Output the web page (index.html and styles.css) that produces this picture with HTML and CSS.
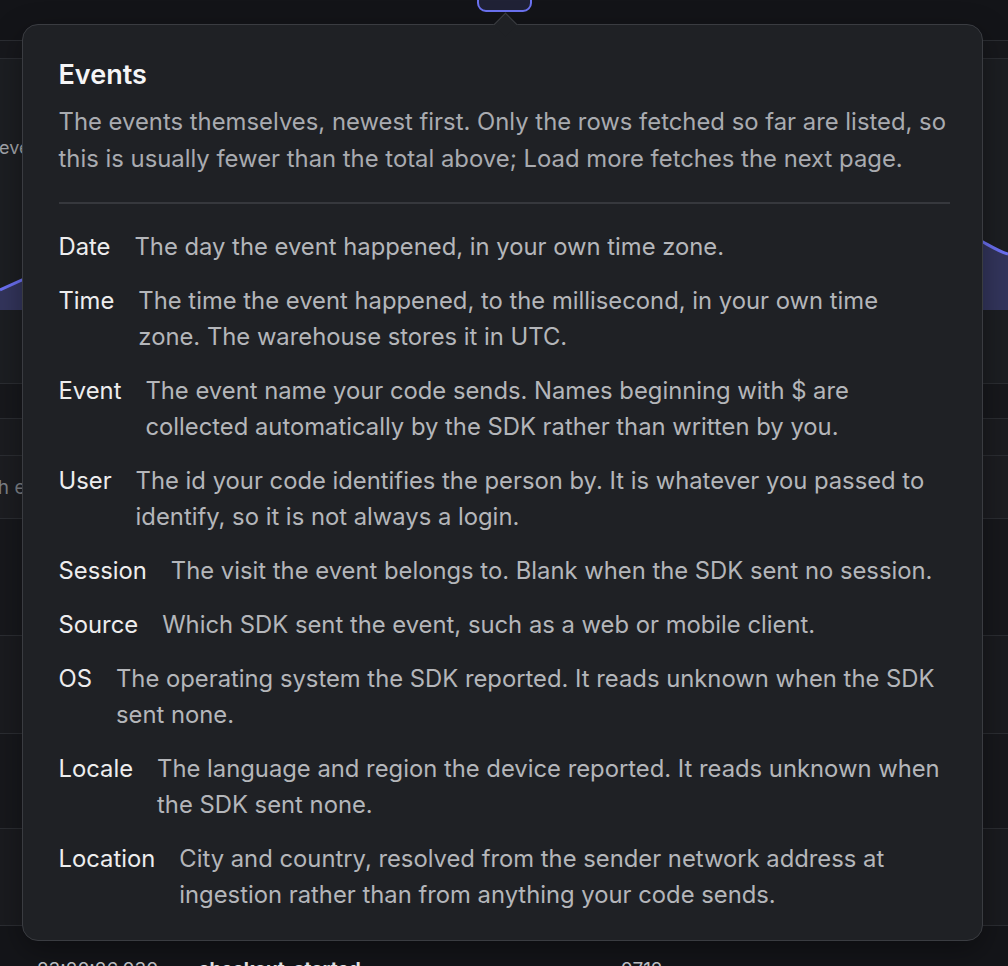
FILE: index.html
```html
<!DOCTYPE html>
<html lang="en">
<head>
<meta charset="utf-8">
<title>Events</title>
<link rel="stylesheet" href="styles.css">
</head>
<body>
<div class="page">
  <header class="topbar">
    <div class="trigger"></div>
  </header>
  <div class="tabs"></div>
  <section class="card">
    <div class="card-label">events</div>
    <svg class="chart" viewBox="0 0 1008 83" preserveAspectRatio="none" aria-hidden="true">
      <path d="M0 63 L22 53 L300 40 L600 30 L983 15 C992 20 1000 25 1008 27 L1008 83 L0 83 Z" fill="#33355c"/>
      <path d="M0 63 L22 53 L300 40 L600 30 L983 15 C992 20 1000 25 1008 27" fill="none" stroke="#6b70f2" stroke-width="3"/>
    </svg>
  </section>
  <div class="band"></div>
  <div class="band band-light"></div>
  <div class="search"><span class="search-text">Search events</span></div>
  <div class="trow trow-dark"></div>
  <div class="trow trow-a"></div>
  <div class="trow trow-dark trow-b"></div>
  <div class="trow trow-c"></div>
  <div class="lastrow">
    <span class="cell-time">23:20:26.030</span>
    <span class="cell-event">checkout_started</span>
    <span class="cell-user">0712</span>
  </div>
</div>

<div class="popover" role="dialog" aria-labelledby="pop-title">
  <h2 class="pop-title" id="pop-title">Events</h2>
  <p class="pop-desc">The events themselves, newest first. Only the rows fetched so far are listed, so this is usually fewer than the total above; Load more fetches the next page.</p>
  <div class="pop-divider"></div>
  <dl class="terms">
    <div class="term-row"><dt>Date</dt><dd>The day the event happened, in your own time zone.</dd></div>
    <div class="term-row"><dt>Time</dt><dd>The time the event happened, to the millisecond, in your own time zone. The warehouse stores it in UTC.</dd></div>
    <div class="term-row"><dt>Event</dt><dd>The event name your code sends. Names beginning with $ are collected automatically by the SDK rather than written by you.</dd></div>
    <div class="term-row"><dt>User</dt><dd>The id your code identifies the person by. It is whatever you passed to identify, so it is not always a login.</dd></div>
    <div class="term-row"><dt>Session</dt><dd>The visit the event belongs to. Blank when the SDK sent no session.</dd></div>
    <div class="term-row"><dt>Source</dt><dd>Which SDK sent the event, such as a web or mobile client.</dd></div>
    <div class="term-row"><dt>OS</dt><dd>The operating system the SDK reported. It reads unknown when the SDK sent none.</dd></div>
    <div class="term-row"><dt>Locale</dt><dd>The language and region the device reported. It reads unknown when the SDK sent none.</dd></div>
    <div class="term-row"><dt>Location</dt><dd>City and country, resolved from the sender network address at ingestion rather than from anything your code sends.</dd></div>
  </dl>
</div>
</body>
</html>
```

FILE: styles.css
```css
html, body {
  margin: 0;
  padding: 0;
}

body {
  background: #141519;
  font-family: Inter, "Noto Sans", "Liberation Sans", sans-serif;
  width: 1008px;
  height: 966px;
  overflow: hidden;
  position: relative;
}

/* ---------- background page ---------- */
.page {
  display: flex;
  flex-direction: column;
}

.topbar {
  height: 40px;
  background: #131418;
  border-bottom: 1px solid #2b2d32;
  display: flex;
  justify-content: flex-start;
}

.trigger {
  margin-left: 477px;
  margin-top: -18px;
  width: 51px;
  height: 26px;
  border: 2.5px solid #6b72f0;
  border-radius: 9px;
  background: #202236;
}

.tabs {
  height: 17px;
  background: #17181c;
  border-bottom: 1px solid #2b2d32;
}

.card {
  height: 324px;
  background: #1c1e22;
  border-bottom: 1px solid #2b2d32;
  display: flex;
  flex-direction: column;
}

.card-label {
  margin-top: 77px;
  margin-left: -1px;
  font-size: 18px;
  line-height: 24px;
  color: #a3a5aa;
}

.chart {
  display: block;
  width: 1008px;
  height: 83px;
  margin-top: 67px;
}

.band {
  height: 34px;
  background: #17181c;
  border-bottom: 1px solid #2b2d32;
}

.band-light {
  height: 36px;
  background: #1b1c20;
}

.search {
  height: 62px;
  background: #1c1d21;
  border-bottom: 1px solid #2b2d32;
  display: flex;
  align-items: center;
}

.search-text {
  margin-left: -54px;
  font-size: 19px;
  color: #7d8086;
  white-space: nowrap;
}

.trow {
  height: 116px;
  background: #1a1b1f;
  border-bottom: 1px solid #2b2d32;
}

.trow-dark {
  background: #17181c;
}

.trow-a { height: 97px; }
.trow-b { height: 94px; }
.trow-c { height: 96px; }

.lastrow {
  height: 60px;
  background: #141519;
  display: flex;
  align-items: flex-start;
  padding-top: 32px;
  padding-left: 37px;
  gap: 40px;
  font-size: 19px;
  line-height: 24px;
  white-space: nowrap;
}

.cell-time {
  color: #c9cbd0;
}

.cell-event {
  color: #f1f1f3;
  font-weight: 700;
}

.cell-user {
  margin-left: 220px;
  color: #c9cbd0;
}

/* ---------- popover ---------- */
.popover {
  position: absolute;
  left: 22px;
  top: 24px;
  width: 961px;
  height: 917px;
  box-sizing: border-box;
  background: #1f2125;
  border: 1.5px solid #3a3c41;
  border-radius: 16px;
  padding: 32.5px 32px 0 35.5px;
  box-shadow: 0 10px 30px rgba(0, 0, 0, 0.35);
}

.popover::before {
  content: "";
  position: absolute;
  top: -9px;
  left: 474px;
  width: 16px;
  height: 16px;
  background: #1f2125;
  border-top: 1.5px solid #3a3c41;
  border-left: 1.5px solid #3a3c41;
  transform: rotate(45deg);
}

.pop-title {
  margin: 0;
  font-size: 27px;
  line-height: 33px;
  font-weight: 600;
  color: #f5f5f6;
}

.pop-desc {
  margin: 12.5px 0 0;
  font-size: 23.85px;
  line-height: 37px;
  color: #a9abb0;
}

.pop-divider {
  margin-top: 24.5px;
  height: 2px;
  background: #36383d;
}

.terms {
  margin: 25px 0 0;
  display: flex;
  flex-direction: column;
  gap: 18px;
}

.term-row {
  display: flex;
  gap: 24px;
  font-size: 23.8px;
  line-height: 36px;
}

.term-row dt {
  color: #ededee;
  flex: none;
}

.term-row dd {
  margin: 0;
  padding-right: 6px;
  flex: 1;
  color: #b4b6ba;
}
```
